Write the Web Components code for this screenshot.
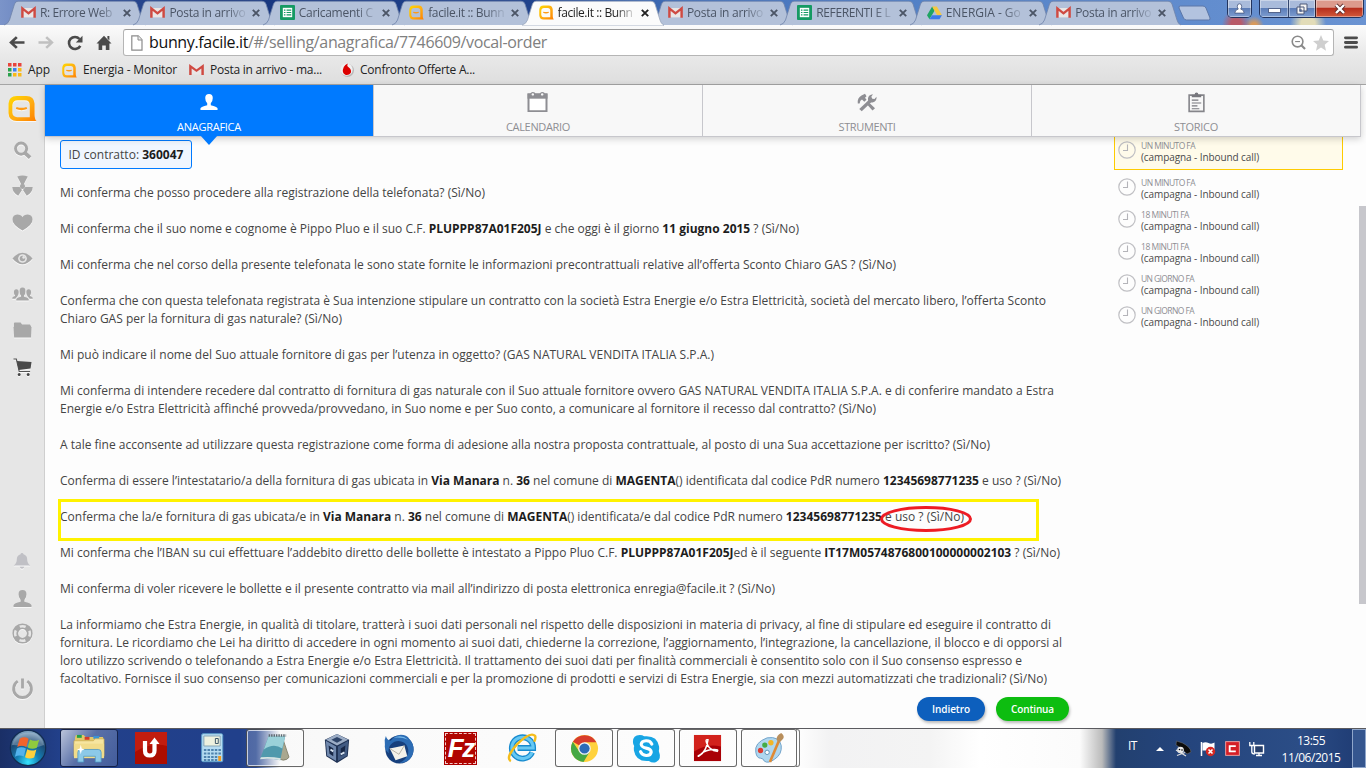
<!DOCTYPE html>
<html lang="it">
<head>
<meta charset="utf-8">
<title>facile.it :: Bunny</title>
<style>
html,body{margin:0;height:768px;width:1366px;overflow:hidden;background:#fdfdfd;font-family:"Open Sans","Noto Sans",sans-serif;font-size:12px;color:#333}
</style>
</head>
<body>
<desktop-screen></desktop-screen>
<script>
const ICONS = {
gmail:['0 0 16 16','<rect x="1" y="2.5" width="14" height="11.5" fill="#e9e6e6"/><path d="M1.500 14.500V3l6.500 6 6.500-6v11.500" fill="none" stroke="#cf4a42" stroke-width="2.6"/>'],
sheets:['0 0 16 16','<rect width="16" height="16" rx="1" fill="#159a63"/><path d="M3 3h10v10H3z" fill="#fff"/><path d="M4.2 5.5h1.6M7 5.5h5M4.2 8h1.6M7 8h5M4.2 10.5h1.6M7 10.5h5" stroke="#159a63" stroke-width="1.3"/>'],
drive:['0 0 16 16','<path d="M5.5 1.5 0 11l2.6 4.3L8 6z" fill="#1fa463"/><path d="M5.5 1.5h5L16 10.8h-5.2z" fill="#f6c83f"/><path d="M5.4 10.8H16l-2.7 4.5H2.6z" fill="#3d7be8"/>'],
facile:['0 0 30 28','<defs><linearGradient id="g" x1="0" y1="0" x2="1" y2="1"><stop offset="0" stop-color="#ffd900"/><stop offset=".55" stop-color="#ffab12"/><stop offset="1" stop-color="#ff7f00"/></linearGradient></defs><path fill-rule="evenodd" fill="url(#g)" d="M9 1h10q8 0 8.500 8v12q.3 5 2 6H9q-8 0-8.500-8V9Q1 1 9 1zM10 5.500Q5 5.500 4.500 10.500v8q.5 4.500 5 4.500h13V10.500q0-5-5-5z"/><path d="M8.500 13.500q5.500 2 11 0" stroke="#ff9b16" stroke-width="2.4" fill="none"/>'],
page:['0 0 12 16','<path d="M.8.8h6.400L11 4.800v10.400H.8z" fill="#fff" stroke="#8c8c8c" stroke-width="1.2"/><path d="M7 .8v4.200h4" fill="#eee" stroke="#8c8c8c"/>'],
back:['0 0 16 14','<path d="M15.500 7H2.500M7.800 1.200 2 7l5.800 5.800" fill="none" stroke="#4b4b4b" stroke-width="2.700"/>'],
fwd:['0 0 16 14','<path d="M.5 7h13M8.200 1.200 14 7l-5.800 5.800" fill="none" stroke="#c0c0c0" stroke-width="2.500"/>'],
reload:['0 0 16 16','<path d="M13.300 10.800A6 6 0 1 1 12.500 4" fill="none" stroke="#4b4b4b" stroke-width="2.600"/><path d="M15.500.8v6.700H8.800z" fill="#4b4b4b"/>'],
home:['0 0 16 16','<path d="M8 .8 15.500 8.500H13.400V15H9.800v-4.600H6.200V15H2.600V8.500H.5zM11.400 1h2v4.500l-2-2z" fill="#4b4b4b"/>'],
zoomout:['0 0 16 16','<circle cx="7" cy="7" r="5.700" fill="none" stroke="#8a8a8a" stroke-width="1.700"/><path d="M4.400 7h5.200" stroke="#8a8a8a" stroke-width="1.200"/><path d="m11 11 4 4" stroke="#8a8a8a" stroke-width="2.300"/>'],
star:['0 0 16 16','<path d="M8 0l2.300 5.400 5.700.5-4.300 3.900 1.300 5.900L8 12.600l-5 3.100 1.300-5.900L0 5.900l5.700-.5z" fill="#cfcfcf"/>'],
menu:['0 0 14 14','<path d="M1.500 2h11M1.500 7h11M1.500 12h11" stroke="#4b4b4b" stroke-width="3" stroke-linecap="round"/>'],
apps:['0 0 14 14','<g><path d="M0 0h3.500v3.500H0zM5 0h3.500v3.500H5zM10 0h3.500v3.500H10z" fill="#e8453c"/><path d="M0 5h3.500v3.500H0z" fill="#2ba24c"/><path d="M5 5h3.500v3.500H5z" fill="#3a80f0"/><path d="M10 5h3.500v3.500H10zM5 10h3.500v3.500H5zM10 10h3.500v3.500H10z" fill="#f9b916"/><path d="M0 10h3.500v3.500H0z" fill="#2ba24c"/></g>'],
voda:['0 0 16 16','<circle cx="8.500" cy="8.500" r="7.500" fill="#b9b9b9"/><circle cx="7.500" cy="7.500" r="7" fill="#f0f0f0"/><path d="M8.800.500Q5.500 2 4.300 4.700 1.500 11 6 13.500q4 1 6.300-2 1.400-4-2.500-6.700Q7.500 3 8.800.500z" fill="#dc0000"/>'],
close:['0 0 8 8','<path d="m.8.8 6.400 6.400M7.200.8.8 7.200" stroke="currentColor" stroke-width="1.900"/>'],
search:['0 0 20 20','<circle cx="8.500" cy="8" r="5.900" fill="none" stroke="#a8a8a8" stroke-width="3"/><path d="m12.500 12.500 5.500 5" stroke="#a8a8a8" stroke-width="4"/>'],
rad:['0 0 22 20','<g fill="#a8a8a8"><path d="M5.500.5q5.500-1.800 11 0L12.500 8h-3z"/><path d="M.3 11h7.700l2.500 3-4 5.800Q.5 16.500.3 11z"/><path d="M21.700 11H14l-2.500 3 4 5.800q6-3.300 6.200-8.800z"/><circle cx="11" cy="10.300" r="2.600"/></g>'],
heart:['0 0 22 18','<path d="M11 17.500Q0 11 .5 5.500.9.800 5.500.5 9.500.5 11 3.500 12.500.5 16.500.5q4.600.3 5 5Q22 11 11 17.500z" fill="#a8a8a8"/>'],
eye:['0 0 22 14','<path d="M.5 7Q5.500.8 11 .8T21.500 7Q16.500 13.200 11 13.200T.5 7z" fill="#a8a8a8"/><circle cx="11" cy="7" r="4.600" fill="#e6e6e6"/><circle cx="11" cy="7" r="2.900" fill="#a8a8a8"/><circle cx="12.200" cy="5.800" r="1.400" fill="#e6e6e6"/>'],
group:['0 0 22 15','<g fill="#a8a8a8"><path d="M8 5Q7.700.6 11 .5T14 5q0 3-1.500 4.500v1q4.500 1 5 2.500v1.500h-13V13q.5-1.500 5-2.500v-1Q8 8 8 5z"/><path d="M2 5.500Q2 2.300 4.500 2.300T7 5.500Q7 8 6 9v.7L3.500 12.500H.3v-1Q1 10.300 3.200 9.700V9Q2 8 2 5.500zM20 5.500q0-3.200-2.500-3.200T15 5.500Q15 8 16 9v.7l2.500 2.800h3.200v-1Q21 10.300 18.800 9.700V9Q20 8 20 5.500z"/></g>'],
folder:['0 0 20 16','<path d="M1 1.500Q1 .5 2 .5h6L9.500 2.500H18v2H1zM.5 5h19L19 15.500H1.200z" fill="#a8a8a8"/><path d="M1 3.500h18V12H1z" fill="#a8a8a8"/>'],
cart:['0 0 20 18','<path d="M.5 1h3l3 12.500H18" fill="none" stroke="#555" stroke-width="1.200"/><path d="M4 3l15.500 1-1 6.500L6 12z" fill="#4a4a4a"/><circle cx="6.500" cy="16.500" r="1.500" fill="#444"/><circle cx="16" cy="16.500" r="1.500" fill="#444"/>'],
bell:['0 0 20 20','<path d="M10 1q1.500 0 1.600 1.500Q15.500 3.500 15.800 8q0 5 3.500 7H.7q3.500-2 3.500-7Q4.500 3.500 8.400 2.500 8.500 1 10 1zM7.500 16.300h5q-.5 2.400-2.500 2.400t-2.500-2.400z" fill="#c0c0c5"/>'],
user:['0 0 20 20','<path d="M5.800 5.500Q5.800 1 10 1t4.200 4.500q0 3.500-2.200 6v2q6.800 1.500 7.500 3.500v2H.5v-2Q1.200 15 8 13.500v-2q-2.200-2.500-2.200-6z" fill="currentColor"/>'],
ring:['0 0 22 22','<circle cx="11" cy="11" r="7.600" fill="none" stroke="#a8a8a8" stroke-width="6"/><circle cx="11" cy="11" r="7.700" fill="none" stroke="#e6e6e6" stroke-width="2.600" stroke-dasharray="6.400 5.694" stroke-dashoffset="3.200"/>'],
power:['0 0 22 22','<path d="M6 3.300a9.300 9.300 0 1 0 10 0" fill="none" stroke="#a8a8a8" stroke-width="3"/><path d="M11 .5v10.500" stroke="#a8a8a8" stroke-width="3"/>'],
cal:['0 0 22 22','<path d="M1.500 2.500h18V20h-18z" fill="#fff" stroke="#8e8e93" stroke-width="2"/><path d="M.5 1.500h20V7H.5z" fill="#8e8e93"/><circle cx="5.800" cy="2.500" r="1.900" fill="#f8f8f8" stroke="#8e8e93" stroke-width="1.300"/><circle cx="15.200" cy="2.500" r="1.900" fill="#f8f8f8" stroke="#8e8e93" stroke-width="1.300"/>'],
tools:['0 0 20 20','<path d="M.800 11Q0 5 4.500 2.500L8 .800 9.500 3.500 8 5 9.500 7 7.300 9.200 5 6.800Q3 7.500 2.600 11z" fill="#8e8e93"/><path d="m10.300 12.300 5.200 6 2.500-2.200-5.500-5.500z" fill="#8e8e93"/><path d="M3.500 18 13 8.500" stroke="#8e8e93" stroke-width="3.500"/><path d="M11 5.500Q11.500 1.800 16 1.200L14.300 4l1 2 2.200.300L19.500 4q.500 5-4 6-5 .500-4.500-4.500z" fill="#8e8e93"/>'],
clip:['0 0 18 22','<path d="M1.200 3.300h15.600v17H1.200z" fill="#f8f8f8" stroke="#85858a" stroke-width="1.700"/><path d="M4 5.500V3h3Q7 .5 9 .5T11 3h3v2.500z" fill="#77777d"/><path d="M4 8.500h7M4 11.500h10M4 14.500h6M4 17.500h8" stroke="#77777d" stroke-width="1.200"/>'],
clock:['0 0 18 18','<circle cx="9" cy="9" r="8.200" fill="none" stroke="#c0c0c4" stroke-width="1.200"/><path d="M9.500 3.500v6H5" fill="none" stroke="#b4b4b9" stroke-width="1.100"/>'],
orb:['0 0 38 38','<defs><radialGradient id="o" cx=".5" cy=".9" r=".9"><stop offset="0" stop-color="#35e4ff"/><stop offset=".35" stop-color="#1480b5"/><stop offset=".7" stop-color="#1c4a75"/><stop offset="1" stop-color="#8fb1cc"/></radialGradient></defs><circle cx="19" cy="19" r="17.700" fill="url(#o)" stroke="#122c50" stroke-width="1.200"/><path d="M3 16Q6 4 19 3.500T35 16Q25 20 19 18T3 16z" fill="#fff" opacity=".25"/><g transform="translate(-1.900 -1.900) scale(1.100)"><path d="M11.500 10.500q4-2.500 8 0L17.500 18q-4-2-8.300 0z" fill="#f2642c"/><path d="M20.800 11.200q4 2.500 8.400.2l-2.200 7.300q-4 2-8.300-.2z" fill="#8fca3e"/><path d="M8.900 19.500q4-2.200 8.200 0l-2 7.300q-4-2-8 .2z" fill="#53b2ec"/><path d="M18.300 20.200q4 2.300 8.300.1l-2 7.300q-4 2-8.300-.2z" fill="#ffd03c"/></g>'],
explorer:['0 0 34 32','<path d="M2 5l1-3h8l2 2h18v20H2z" fill="#e2c76a"/><path d="M4 2h5v3H4z" fill="#23a048"/><path d="M12 4h5v3h-5z" fill="#d53b28"/><path d="M21 3h6v3h-6z" fill="#3a93d6"/><path d="M1 8h20l2-2h9v18H1z" fill="#f6e5a0" stroke="#c6a84a" stroke-width=".7"/><path d="M1 11h31v15H1z" fill="#f1dc8b"/><path d="M5 30V20q0-3 3-3h18q3 0 3 3v10h-6v-6H11v6z" fill="#8cc9e8" stroke="#4e98c4" stroke-width=".8"/><path d="M8 12l1 4 3 1-3 1-1 4-1-4-3-1 3-1z" fill="#fff"/>'],
ured:['0 0 32 32','<path d="M0 0h32v32H0z" fill="#ad0d00"/><path d="M0 0h32v14Q16 10 0 20z" fill="#ca2515" opacity=".7"/><path d="M10 9v9.500q0 5 4.800 5T19.500 18.500v-8" stroke="#fff" stroke-width="4.200" fill="none"/><path d="M14.500 12 19.500 5.500l5 6.500z" fill="#fff"/>'],
calc:['0 0 24 30','<rect x=".7" y=".7" width="22" height="28" rx="1.500" fill="#b6dcf2" stroke="#5c9dc9"/><path d="M3 3h17v10H3z" fill="#eef1df" stroke="#86a5b5"/><path d="M15 5.500h3v5h-3z" fill="none" stroke="#3c5769"/><path d="M3 17h18M3 20.500h18M3 24h18M3 27h14" stroke="#4f83ae" stroke-width="2" stroke-dasharray="2.600 1.200"/><path d="M18 23h3v5h-3z" fill="#f19a20"/>'],
note:['0 0 32 32','<path d="M24 4 31 25q-2 3-6 3L21 27z" fill="#a9a78f" stroke="#77755f" stroke-width=".800"/><path d="M10 3h17l-5 25Q12 26 1 27z" fill="#5099ac"/><path d="M10 3h17l-3 13Q15 10 5 17z" fill="#9bd1d9"/><path d="M1 27q11-1 21 1l.500-2Q12 24 2 25z" fill="#d7e3e3"/><path d="M10 2.500h18" stroke="#5c6870" stroke-width="2.500" stroke-dasharray="1.500 1"/>'],
vbox:['0 0 30 32','<path d="M15 1l13 6-1.500 17L15 31 3.500 24 2 7z" fill="#1e3153"/><path d="M15 1l12 6-12 6L3 7z" fill="#9cadc6"/><path d="M15 4l6 3-6 3-6-3z" fill="#2e4468"/><path d="M3 8l11 6v15L4.500 23.500z" fill="#7088ad"/><path d="M27 8l-11 6v15l9.500-5.500z" fill="#425b83"/><path d="M6 13l5 3v8l-4-2.500zM24 13l-5 3v8l4-2.500z" fill="#172746"/><path d="M8 17l3 2M19 22l4-2" stroke="#d6e2f0" stroke-width="2"/>'],
tbird:['0 0 34 34','<circle cx="18" cy="18" r="14.500" fill="#17407d"/><path d="M3 13Q2 8 4 4 5 8 9 9 14 1.500 22 3q4 .500 6 4 5 5 4.500 12Q31 31 18 32q7-3 9-10 1-7-4-11-8-4-14 2-3 4-2 9Q2 18 3 13z" fill="#2c6cb4"/><path d="M12 6q8-4 15 2-7-3-15-2z" fill="#76b8ea"/><path d="M8 17l15-3 3 11-12 4z" fill="#f4f2ea"/><path d="M8 17l9.500 6L23 14" stroke="#b7b2a6" fill="none"/>'],
ie:['0 0 32 32','<path d="M26 20A11 11 0 1 1 27 15.500H11" fill="none" stroke="#178bcf" stroke-width="6"/><path d="M26 20A11 11 0 1 1 27 15.500H11" fill="none" stroke="#67c8f3" stroke-width="3.200"/><path d="M4 29Q-2 26 10 12 24-2 29 3q1 2-1 6" fill="none" stroke="#f4bd1d" stroke-width="2.500"/>'],
chrome:['0 0 30 30','<circle cx="15" cy="15" r="14" fill="#ffd23d"/><path d="M15 15 3 8A14 14 0 0 1 27.300 8.500H15z" fill="#d83d2c"/><path d="M15 15 9.500 18 2.900 8A14 14 0 0 0 14 29l6-10z" fill="#45a844"/><circle cx="15" cy="15" r="6.500" fill="#f5f5f5"/><circle cx="15" cy="15" r="5.300" fill="#2d6cb8"/>'],
skype:['0 0 32 32','<path d="M2 9Q2 2 9 2q3 0 4.500 1.400Q27 2 29 14q.3 3-.3 4.500Q32 27 26 30q-4 1.500-7.500-1.200Q5 30 3 18q-.3-3 .3-4.500Q2 12 2 9z" fill="#18a5e4"/><path d="M21.500 11.500Q20 7.800 15.500 8t-5 3.600q.2 3 5.200 4t5.200 4q-.5 3.800-5.300 3.600-4.500-.2-5.800-4" stroke="#fff" stroke-width="3.200" fill="none" stroke-linecap="round"/>'],
pdf:['0 0 30 30','<path d="M1 1h28v27H1z" fill="#a90006"/><path d="M1 1h28v12Q15 9 1 18z" fill="#dc2a22" opacity=".8"/><path d="M6 23q8-5 9.500-17-3-1-1.500 3 3 8 11 9 2-2-3-2-9 0-14 5-4 2-2 2z" fill="none" stroke="#fff" stroke-width="1.500"/>'],
paint:['0 0 34 32','<path d="M3 20Q1 10 15 5q13-2 15 8 1 9-7 14-7 5-11 2-1-3-4-3-4 0-5-6z" fill="#afd7ef" stroke="#6da0c7"/><circle cx="8" cy="18" r="2.800" fill="#dd3d31"/><circle cx="12.500" cy="12.500" r="2.800" fill="#44ac45"/><circle cx="19" cy="10" r="2.800" fill="#f3b626"/><circle cx="15" cy="20" r="2.300" fill="#fff" stroke="#5d91b6"/><path d="M28 7 18 30" stroke="#df8a34" stroke-width="2.800"/><path d="M25 7q0-5 5-7 4 3 2 6l-4 4z" fill="#b88e5c"/>'],
pirate:['0 0 16 16','<path d="M1 4 1.500 0l6 2q8 4 8.500 9l-4 2-6-6z" fill="#0c0c0c" stroke="#777" stroke-width=".500"/><circle cx="5.500" cy="9" r="3.300" fill="#eee"/><circle cx="4.500" cy="8.500" r=".8"/><circle cx="7" cy="9" r=".8"/><path d="M1 9l10 6M2 14.500l8-3" stroke="#ddd" stroke-width="1.300"/>'],
flag:['0 0 16 16','<path d="M1.500 1v14" stroke="#fff" stroke-width="1.500"/><path d="M2.500 2q3-1.500 6 0t6-.5v8H2.500z" fill="#fff"/><circle cx="10.500" cy="10.500" r="4.700" fill="#d62822"/><path d="m8.500 8.500 4 4m0-4-4 4" stroke="#fff" stroke-width="1.600"/>'],
cred:['0 0 16 16','<rect x=".7" y=".7" width="14.600" height="14.600" fill="#d51e26" stroke="#f1a4a4"/><path d="M11.500 5.500H5v5.500h6.500" fill="none" stroke="#fff" stroke-width="2"/>'],
net:['0 0 16 16','<path d="M5.500 4.500h9v7.500h-9zM7 14.500h6M10 12v2.500" fill="#263e6a" stroke="#fff" stroke-width="1.400"/><path d="M.8 1v3.500h4V1M2.800 4.500V11q0 2 3 2" fill="none" stroke="#fff" stroke-width="1.300"/>'],
person:['0 0 10 10','<path d="M3 3Q3 .7 5 .7T7 3Q7 5 6 5.500q3 .5 3.300 3.700H.7Q1 6 4 5.500 3 5 3 3z" fill="#fff" stroke="#44557d" stroke-width=".7"/>'],
restore:['0 0 12 12','<path d="M4 1h7v7H4zM1 4h7v7H1z" fill="#f4f4f4" stroke="#4c5878"/><path d="M3.300 6.300h2.400v2.400H3.300z" fill="#526690"/>'],
xwin:['0 0 12 10','<path d="m2 1 8 8m0-8-8 8" stroke="#5b2a2a" stroke-width="4"/><path d="m2 1 8 8m0-8-8 8" stroke="#fff" stroke-width="2.400"/>']
};

class Base extends HTMLElement {
  paint(html) { if (!this.shadowRoot) this.attachShadow({mode:'open'}).innerHTML = html; }
}
const def = (name, render) => customElements.define(name, class extends Base {
  connectedCallback() { this.paint(render(this)); }
});
const ic = (n, w, h = w) => `<ui-icon name="${n}" w="${w}" h="${h}"></ui-icon>`;

def('ui-icon', el => {
  const [vb, body] = ICONS[el.getAttribute('name')], w = el.getAttribute('w'), h = el.getAttribute('h') || w;
  return `<style>:host{display:block;flex:none;width:${w}px;height:${h}px}svg{display:block;overflow:visible}</style>
  <svg width="${w}" height="${h}" viewBox="${vb}" preserveAspectRatio="none">${body}</svg>`;
});

def('browser-tab', el => {
  const on = el.hasAttribute('active');
  return `<style>
  :host{display:block;position:relative;flex:none;width:129.4px;height:25px;z-index:${on?2:1};color:${on?'#222':'#4b5566'}}
  .bg{position:absolute;left:-4px;top:0;width:142px;height:26px}
  .row{position:relative;display:flex;align-items:center;height:25px;padding-left:13px}
  .t{width:78px;margin-left:4px;white-space:nowrap;-webkit-mask-image:linear-gradient(90deg,#000 74%,#0003 96%);line-height:18px}
  ui-icon.x{margin-left:5px}</style>
  <svg class="bg" viewBox="0 0 142 26"><path d="M0 25Q4 24 5.500 20L10.500 4Q11.500 1.200 14 1.200H129Q132 1.200 133 4L138 20Q139 24 142 25${on?'V26H0':''}" fill="${on?'#fbfbfb':'#b3c1d9'}" stroke="${on?'#9aa7bd':'#6f83aa'}" stroke-width=".8"/></svg>
  <div class="row">${ic(el.getAttribute('icon'),15,el.getAttribute('icon')==='gmail'?13:15)}<div class="t"><fit-text w="${el.getAttribute('w')}">${el.getAttribute('label')}</fit-text></div><ui-icon class="x" name="close" w="8" h="8"></ui-icon></div>`;
});

def('window-controls', () => `<style>
 :host{display:flex;height:18px;gap:7px}
 div{display:flex;height:18px;border:1px solid #22345e;border-top:0;border-radius:0 0 5px 5px;box-sizing:border-box;overflow:hidden}
 span{display:flex;align-items:center;justify-content:center;background:linear-gradient(#a9bbdb 45%,#5c7db8 50%,#7d9dd0);box-shadow:inset 0 0 0 1px #ffffff60}
 .u{width:23px}.a{width:28px}.b{width:26px;border-left:1px solid #33466e}.c{width:47px;border-left:1px solid #33202c;background:linear-gradient(#dc9a8c 42%,#b72f1d 50%,#d25a3c)}
 i{width:11px;height:3px;background:#fff;border:1px solid #55658c;margin-top:4px}
 </style><div><span class="u">${ic('person',11)}</span></div><div><span class="a"><i></i></span><span class="b">${ic('restore',12)}</span><span class="c">${ic('xwin',12,10)}</span></div>`);

def('tab-strip', () => `<style>
 :host{display:flex;height:25px;box-sizing:border-box;padding-left:8px;position:relative;
 background:radial-gradient(circle at 1236px 24px,#b85a68 0 5px,transparent 14px),radial-gradient(circle at 1254px 26px,#d99a5a 0 3px,transparent 10px),radial-gradient(circle at 1308px 24px,#e2dcb8 0 7px,transparent 18px),linear-gradient(90deg,#7b94c9,#6580bd 40px,#2c4b93 110px,#17357d 220px,#1e3f88 420px,#21438c 530px,#4472bb 690px,#5583c8 950px,#6a93d2 1366px)}
 .new{flex:none;width:34px;height:16px;margin:5px 0 0 5px}
 window-controls{position:absolute;right:2px;top:0}
 </style>
 <browser-tab icon="gmail" label="R: Errore Web" w="72"></browser-tab>
 <browser-tab icon="gmail" label="Posta in arrivo" w="76"></browser-tab>
 <browser-tab icon="sheets" label="Caricamenti C" w="74"></browser-tab>
 <browser-tab icon="facile" label="facile.it :: Bunn" w="76"></browser-tab>
 <browser-tab active icon="facile" label="facile.it :: Bunn" w="75"></browser-tab>
 <browser-tab icon="gmail" label="Posta in arrivo" w="76"></browser-tab>
 <browser-tab icon="sheets" label="REFERENTI E L" w="74"></browser-tab>
 <browser-tab icon="drive" label="ENERGIA - Go" w="75"></browser-tab>
 <browser-tab icon="gmail" label="Posta in arrivo" w="76"></browser-tab>
 <svg class="new" viewBox="0 0 34 16"><path d="M1 3Q.5 1 2.500 1H25q2 0 3 2l4 10q.5 2-1.500 2H8.500q-2 0-3-2z" fill="#b3c3df" stroke="#5c77a8"/></svg>
 <window-controls></window-controls>`);

def('browser-toolbar', () => `<style>
 :host{display:block;height:60px;box-sizing:border-box;background:linear-gradient(#fbfbfb,#e9e9e9 50%,#dedede);border-bottom:1px solid #a5a5a5;color:#222;white-space:nowrap}
 .nav{display:flex;align-items:center;height:35px;padding-left:9px}
 .nav>ui-icon{margin-right:13px}
 .box{display:flex;flex:none;align-items:center;box-sizing:border-box;width:1211px;height:27px;border:1px solid #b5b5b5;border-top-color:#999;border-radius:3px;background:#fff;padding:0 4px 0 7px;margin:0 10px 0 -2px;font-size:16px;color:#808080}
 .box fit-text{margin:0 auto 1px 6px}.box b{font-weight:400;color:#111}
 .box ui-icon+ui-icon{margin-left:7px}
 .marks{display:flex;align-items:center;height:20px;padding-left:8px}
 .marks fit-text{margin-left:6px;margin-top:-2px}
 </style>
 <div class="nav">${ic('back',16,13)}${ic('fwd',16,13)}${ic('reload',16)}${ic('home',16)}
 <div class="box">${ic('page',12,16)}<fit-text w="398"><b>bunny.facile.it</b>/#/selling/anagrafica/7746609/vocal-order</fit-text>${ic('zoomout',15)}${ic('star',16)}</div>${ic('menu',14,13)}</div>
 <div class="marks">${ic('apps',14)}<fit-text w="22">App</fit-text><span style="width:12px"></span>${ic('facile',15)}<fit-text w="94">Energia - Monitor</fit-text><span style="width:12px"></span>${ic('gmail',15,12)}<fit-text w="112">Posta in arrivo - ma...</fit-text><span style="width:18px"></span>${ic('voda',14)}<fit-text w="115">Confronto Offerte A...</fit-text></div>`);

def('side-bar', () => `<style>
 :host{display:flex;flex-direction:column;width:45px;box-sizing:border-box;background:#e6e6e6;border-right:1px solid #cfcfcf;color:#a8a8a8}
 div{height:36px;display:flex;align-items:center;justify-content:center;flex:none;filter:drop-shadow(0 1px 0 #f8f8f8)}
 .logo{height:47px}.sp{flex:1}
 </style>
 <div class="logo">${ic('facile',29,27)}</div><div>${ic('search',19)}</div><div>${ic('rad',21,20)}</div><div>${ic('heart',21,17)}</div><div>${ic('eye',21,13)}</div><div>${ic('group',21,14)}</div><div>${ic('folder',19,16)}</div><div style="height:37px">${ic('cart',19,18)}</div>
 <span class="sp"></span><div style="margin-bottom:1px">${ic('bell',18)}</div><div>${ic('user',19)}</div><div style="margin-top:-1px">${ic('ring',21)}</div><div style="margin:19px 0 22px">${ic('power',21)}</div>`);

def('section-tab', el => `<style>
 :host{position:relative;display:flex;flex-direction:column;align-items:center;width:329px;height:52px;box-sizing:border-box;border-right:1px solid #c7c7cc;border-bottom:1px solid #c7c7cc;background:#f8f8f8;color:#8e8e93;font-size:11px}
 :host([active]){background:#007aff;color:#fff}
 .i{height:34px;display:flex;align-items:center}
 fit-text{line-height:16px}
 .arr{position:absolute;left:155px;top:50px;border:9px solid transparent;border-top:10px solid #007aff;border-bottom:0}
 </style><div class="i"><slot></slot></div><fit-text w="${el.getAttribute('w')}">${el.getAttribute('label')}</fit-text>${el.hasAttribute('active')?'<div class="arr"></div>':''}`);

def('section-nav', () => `<style>:host{display:flex;width:1316px;height:52px;position:relative;z-index:2;box-shadow:0 2px 7px #0000002e}</style>
 <section-tab active label="ANAGRAFICA" w="64">${ic('user',18)}</section-tab>
 <section-tab label="CALENDARIO" w="64">${ic('cal',22,21)}</section-tab>
 <section-tab label="STRUMENTI" w="57">${ic('tools',20,19)}</section-tab>
 <section-tab label="STORICO" w="44">${ic('clip',17,21)}</section-tab>`);

const SCRIPT_TEXT = [
 [[425,'Mi conferma che posso procedere alla registrazione della telefonata? (Sì/No)']],
 [[739,'Mi conferma che il suo nome e cognome è Pippo Pluo e il suo C.F. <b>PLUPPP87A01F205J</b> e che oggi è il giorno <b>11 giugno 2015</b> ? (Sì/No)']],
 [[836,'Mi conferma che nel corso della presente telefonata le sono state fornite le informazioni precontrattuali relative all’offerta Sconto Chiaro GAS ? (Sì/No)']],
 [[986,'Conferma che con questa telefonata registrata è Sua intenzione stipulare un contratto con la società Estra Energie e/o Estra Elettricità, società del mercato libero, l’offerta Sconto'],[282,'Chiaro GAS per la fornitura di gas naturale? (Sì/No)']],
 [[654,'Mi può indicare il nome del Suo attuale fornitore di gas per l’utenza in oggetto? (GAS NATURAL VENDITA ITALIA S.P.A.)']],
 [[994,'Mi conferma di intendere recedere dal contratto di fornitura di gas naturale con il Suo attuale fornitore ovvero GAS NATURAL VENDITA ITALIA S.P.A. e di conferire mandato a Estra'],[816,'Energie e/o Estra Elettricità affinché provveda/provvedano, in Suo nome e per Suo conto, a comunicare al fornitore il recesso dal contratto? (Sì/No)']],
 [[930,'A tale fine acconsente ad utilizzare questa registrazione come forma di adesione alla nostra proposta contrattuale, al posto di una Sua accettazione per iscritto? (Sì/No)']],
 [[1001,'Conferma di essere l’intestatario/a della fornitura di gas ubicata in <b>Via Manara</b> n. <b>36</b> nel comune di <b>MAGENTA</b>() identificata dal codice PdR numero <b>12345698771235</b> e uso ? (Sì/No)']],
 [[904,'Conferma che la/e fornitura di gas ubicata/e in <b>Via Manara</b> n. <b>36</b> nel comune di <b>MAGENTA</b>() identificata/e dal codice PdR numero <b>12345698771235</b> e uso ? (Sì/No)']],
 [[1000,'Mi conferma che l’IBAN su cui effettuare l’addebito diretto delle bollette è intestato a Pippo Pluo C.F. <b>PLUPPP87A01F205J</b>ed è il seguente <b>IT17M0574876800100000002103</b> ? (Sì/No)']],
 [[715,'Mi conferma di voler ricevere le bollette e il presente contratto via mail all’indirizzo di posta elettronica enregia@facile.it ? (Sì/No)']],
 [[991,'La informiamo che Estra Energie, in qualità di titolare, tratterà i suoi dati personali nel rispetto delle disposizioni in materia di privacy, al fine di stipulare ed eseguire il contratto di'],[1002,'fornitura. Le ricordiamo che Lei ha diritto di accedere in ogni momento ai suoi dati, chiederne la correzione, l’aggiornamento, l’integrazione, la cancellazione, il blocco e di opporsi al'],[962,'loro utilizzo scrivendo o telefonando a Estra Energie e/o Estra Elettricità. Il trattamento dei suoi dati per finalità commerciali è consentito solo con il Suo consenso espresso e'],[987,'facoltativo. Fornisce il suo consenso per comunicazioni commerciali e per la promozione di prodotti e servizi di Estra Energie, sia con mezzi automatizzati che tradizionali? (Sì/No)']]
];

def('vocal-order', () => `<style>
 :host{display:block;position:relative;width:1009px;padding:3px 0 0 15px;line-height:18px;color:#444}
 .id{display:flex;align-items:center;justify-content:center;width:132px;height:29px;box-sizing:border-box;border:1px solid #007aff;border-radius:3px;background:#f0f6ff;margin-bottom:15px}
 b{color:#1c1c1c;font-weight:700}
 p{margin:0 0 18px}fit-text{display:block}
 .btns{display:flex;justify-content:flex-end;gap:11px;margin-top:-9px}
 pill-button{flex:none}
 .hl{position:absolute;left:13px;top:362px;width:981px;height:42px;box-sizing:border-box;border:3px solid #fff200}
 .ring{position:absolute;left:834px;top:368px;width:94px;height:28px}
 </style>
 <div class="id"><fit-text w="115">ID contratto: <b>360047</b></fit-text></div>
 ${SCRIPT_TEXT.map(p=>'<p>'+p.map(([w,t])=>`<fit-text w="${w}">${t}</fit-text>`).join('')+'</p>').join('')}
 <div class="btns"><pill-button label="Indietro" w="68" tw="38" color="#0d5fbd"></pill-button><pill-button label="Continua" w="73" tw="43" color="#0dbd10"></pill-button></div>
 <div class="hl"></div><svg class="ring" viewBox="0 0 94 28"><ellipse cx="47" cy="14" rx="44.500" ry="11.500" fill="none" stroke="#ed1c24" stroke-width="3"/></svg>`);

def('pill-button', el => `<style>:host{display:flex;align-items:center;justify-content:center;width:${el.getAttribute('w')}px;height:24px;border-radius:12px;background:${el.getAttribute('color')};color:#fff;font-size:10px;font-weight:600;box-shadow:1px 2px 3px #0004}</style><fit-text w="${el.getAttribute('tw')}">${el.getAttribute('label')}</fit-text>`);

def('history-item', el => `<style>
 :host{display:flex;height:32px;box-sizing:border-box;padding:1px 0 0 3px;border:1px solid transparent;border-width:0 1px}
 :host([current]){height:33px;margin-bottom:4px;padding-top:1px;border:1px solid #fecb00;border-top:0;background:#fffbea}
 .t{margin-left:5px;padding-top:3px}
 fit-text{display:block}
 .a{font-size:8.500px;line-height:10px;color:#8e8e93}.c{font-size:10px;line-height:13px;color:#4a4a4a}
 ui-icon{margin-top:3px}
 </style>${ic('clock',18)}<div class="t"><fit-text class="a" w="${el.getAttribute('w')}">${el.getAttribute('when')}</fit-text><fit-text class="c" w="118">(campagna - Inbound call)</fit-text></div>`);

def('history-list', () => `<style>:host{display:block;width:229px;margin-left:45px;flex:none}</style>
 <history-item current when="UN MINUTO FA" w="54"></history-item>
 <history-item when="UN MINUTO FA" w="54"></history-item>
 <history-item when="18 MINUTI FA" w="48"></history-item>
 <history-item when="18 MINUTI FA" w="48"></history-item>
 <history-item when="UN GIORNO FA" w="53"></history-item>
 <history-item when="UN GIORNO FA" w="53"></history-item>`);

def('task-button', el => `<style>
 :host{display:flex;align-items:center;justify-content:center;width:58px;height:38px;box-sizing:border-box;flex:none;border:1px solid transparent;border-radius:3px}
 :host([open]){border-color:#444c;background:#ffffff30;box-shadow:inset 0 0 0 1px #ffffffb0}
 :host([glass]){border-color:#14224a;background:linear-gradient(125deg,#ffffffb0,#ffffff40 45%,#ffffff26)}
 </style><slot></slot>`);

def('task-bar', () => `<style>
 :host{display:flex;height:40px;box-sizing:border-box;border-top:1px solid #5a5a5f;color:#fff;white-space:nowrap;
 background:linear-gradient(90deg,#1a2f66,#22408a 60px,#21408b 240px,#2b4a92 256px,#f8f8f8 280px,#fafafa 360px,#fdfdfd 800px,#f2f2f3 830px,#f4f4f4 930px,#fff 980px,#fbfbfb 1080px,#bbb 1102px,#22406f 1116px,#24447c 1180px,#2b4d86 1300px,#1e3a72 1366px)}
 .orb{width:55px;display:flex;align-items:center;justify-content:center;margin-right:5px}
 .orb ui-icon{margin-top:-2px}
 .l{display:flex;gap:3.900px}
 .tray{margin-left:auto;display:flex;align-items:center}
 .tray>ui-icon{margin-right:9px}
 .clk{width:60px;display:flex;flex-direction:column;align-items:center;line-height:17px;margin:0 11px 0 7px}
 .desk{width:12px;height:37px;border:1px solid #8fa6cb;background:#35568f}
 .fz{width:31px;height:31px;box-sizing:border-box;border:1px dashed #f4c9c9;background:#b10500;font:italic 700 26px/28px "Liberation Sans",sans-serif;outline:1px solid #a00}
 .fz fit-text{margin-left:2px}
 .edge{width:3px;border:1px solid #777;border-left:0;border-radius:0 3px 3px 0;height:36px;margin-left:-5px}
 .up{border:4px solid transparent;border-bottom-color:#fff;border-top:0;margin:0 11px 0 19px}
 </style>
 <div class="orb">${ic('orb',38)}</div><div class="l">
 <task-button glass>${ic('explorer',33,31)}</task-button>
 <task-button>${ic('ured',32)}</task-button>
 <task-button>${ic('calc',23,30)}</task-button>
 <task-button open>${ic('note',31)}</task-button>
 <task-button>${ic('vbox',28,31)}</task-button>
 <task-button>${ic('tbird',33)}</task-button>
 <task-button><div class="fz"><fit-text w="26">Fz</fit-text></div></task-button>
 <task-button>${ic('ie',31)}</task-button>
 <task-button open>${ic('chrome',29)}</task-button>
 <task-button open>${ic('skype',31)}</task-button>
 <task-button open>${ic('pdf',29)}</task-button>
 <task-button open style="width:56px">${ic('paint',32,31)}</task-button><div class="edge"></div></div>
 <div class="tray"><fit-text w="9" style="margin-bottom:6px">IT</fit-text><span class="up"></span>${ic('pirate',16)}${ic('flag',16)}${ic('cred',15)}${ic('net',16)}
 <div class="clk"><fit-text w="28">13:55</fit-text><fit-text w="59">11/06/2015</fit-text></div><div class="desk"></div></div>`);

def('desktop-screen', () => `<style>
 :host{display:flex;flex-direction:column;width:1366px;height:768px;overflow:hidden}
 .page{position:relative;display:flex;height:643px;background:#fdfdfd}
 .main{flex:1;min-width:0}.cols{display:flex}
 .scroll{position:absolute;right:0;top:121px;width:7px;height:398px;background:#c7c7cc}
 </style>
 <tab-strip></tab-strip><browser-toolbar></browser-toolbar>
 <div class="page"><side-bar></side-bar><div class="main"><section-nav></section-nav><div class="cols"><vocal-order></vocal-order><history-list></history-list></div></div><div class="scroll"></div></div>
 <task-bar></task-bar>`);

/* Keeps a single line of text at a given width by adjusting its tracking. */
customElements.define('fit-text', class extends Base {
  connectedCallback() {
    this.paint('<style>:host{display:block;flex:none;white-space:nowrap}span{display:inline-block}</style><span><slot></slot></span>');
    const span = this.shadowRoot.querySelector('span');
    const n = this.textContent.length, target = +this.getAttribute('w');
    this.style.letterSpacing = ((target - span.getBoundingClientRect().width) / n).toFixed(4) + 'px';
    this.style.width = target + 'px';
  }
});
</script>
</body>
</html>
